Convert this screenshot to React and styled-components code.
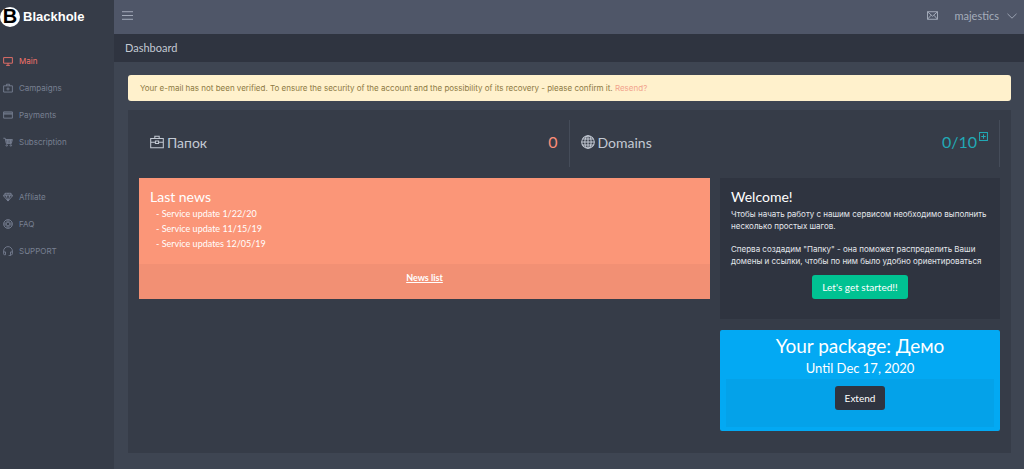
import React from "react";
import styled, { createGlobalStyle } from "styled-components";

const GlobalStyle = createGlobalStyle`
    * {
        box-sizing: border-box;
    }
    body {
        margin: 0;
        background: #3e4552;
        color: #c3c9d3;
        font-family: 'Century Gothic', Lato, 'Noto Sans', sans-serif;
        font-size: 10px;
    }
    h1, h2, h3, p, ul {
        margin: 0;
        padding: 0;
        font-weight: 400;
    }
    a {
        color: inherit;
        text-decoration: none;
    }
    button {
        font-family: inherit;
        cursor: pointer;
    }
`;

const smallFont = "'Century Gothic', Inter, 'Noto Sans', sans-serif";

const icons = {
    desktop: <path d="M1 2.5h14v9H1zM5 15h6M8 11.5V15" />,
    briefcase: <path d="M.8 4h14.4v10.5H.8zM5.5 4V1.5h5V4M.8 8.2h5.4M9.8 8.2h5.4M6.2 6.8h3.6v3H6.2z" />,
    bag: <path d="M1 4.5h14v10H1zM5.5 4.500V2h5v2.500M8 7v5M5.500 9.500h5" />,
    card: <path d="M1 3h14v10H1zM1 5h14M1 6.5h14" />,
    cart: (
        <>
            <path d="M.5 2h3l1.8 8.5h8L15 4H4M4.5 6h10M5 8.2h9M7 4v6.5M9.5 4v6.5M12 4v6.5" />
            <circle cx="6" cy="13.5" r="1.2" />
            <circle cx="12.5" cy="13.5" r="1.2" />
        </>
    ),
    diamond: <path d="M3.5 2h9L15.3 6 8 14.5.7 6zM.7 6h14.6M5.2 6L8 14.5 10.8 6 8 2zM5.2 6L3.5 2M10.8 6l1.7-4" />,
    support: (
        <>
            <circle cx="8" cy="8" r="7" />
            <circle cx="8" cy="8" r="3" />
            <path d="M6.5 1.2v4M9.5 1.2v4M6.5 10.8v4M9.5 10.8v4M1.2 6.5h4M1.2 9.5h4M10.8 6.5h4M10.8 9.5h4" />
        </>
    ),
    headphone: <path d="M4 14H2.5A1.5 1.5 0 0 1 1 12.5V8a7 7 0 0 1 14 0v4.5a1.5 1.5 0 0 1-1.5 1.5H12V9.5h3M1 9.5h3V14M12 14v1.5H9" />,
    world: (
        <>
            <circle cx="8" cy="8" r="7.2" />
            <ellipse cx="8" cy="8" rx="3.6" ry="7.2" />
            <path d="M8 .8v14.4M.8 8h14.4M2 4.5h12M2 11.5h12" />
        </>
    ),
    mail: <path d="M.7 2.5h14.6v11H.7zM.7 2.5L8 9l7.3-6.500M.7 13.500L6 7.500M15.300 13.500L10 7.500" />,
    menu: <path d="M0 2.5h16M0 8h16M0 13.5h16" />,
    down: <path d="M.8 4.5L8 11.5l7.200-7" />,
    plus: <path d="M1 1h14v14H1zM8 4v8M4 8h8" />,
};

const Icon = ({ name, size = 10, weight = 1.4 }) => (
    <svg width={size} height={size} viewBox="0 0 16 16" fill="none" stroke="currentColor" strokeWidth={weight} aria-hidden="true">
        {icons[name]}
    </svg>
);

const Page = styled.div`
    display: flex;
    min-height: 100vh;
`;

const Sidebar = styled.aside`
    flex: 0 0 114px;
    background: #363c48;
`;

const Logo = styled.a`
    display: flex;
    align-items: center;
    gap: 3px;
    height: 33px;
    color: #fff;
    font: bold 13px 'Liberation Sans', Arial, sans-serif;
`;

const LogoMark = styled.span`
    display: flex;
    align-items: center;
    justify-content: center;
    width: 20px;
    height: 20px;
    border-radius: 50%;
    background: #fff;
    color: #000;
    font-size: 20px;
`;

const Menu = styled.ul`
    list-style: none;
    margin-top: ${(props) => (props.$first ? 14 : 28)}px;
`;

const MenuLink = styled.a`
    display: flex;
    align-items: center;
    gap: 6px;
    height: 27px;
    padding-left: 3px;
    font-family: ${smallFont};
    font-size: 8px;
    color: ${(props) => (props.$active ? "#f3736a" : "#788092")};
`;

const Main = styled.main`
    flex: 1;
    min-width: 0;
`;

const TopBar = styled.header`
    display: flex;
    align-items: center;
    justify-content: space-between;
    height: 34px;
    padding: 0 7px 3px 8px;
    background: #4f5668;
`;

const TopButton = styled.button`
    display: flex;
    align-items: center;
    gap: 8px;
    padding: 0;
    border: 0;
    background: none;
    color: #a5adbb;
    font-size: 11px;
`;

const TopActions = styled.div`
    display: flex;
    align-items: center;
    gap: 16px;
`;

const TitleBar = styled.div`
    height: 28px;
    padding: 0 11px;
    background: #2f3440;
    line-height: 28px;

    h1 {
        font-size: 11px;
    }
`;

const Content = styled.div`
    padding: 13px 13px 16px 14px;
`;

const Alert = styled.div`
    padding: 0 12px;
    border-radius: 3px;
    background: #fff1cc;
    color: #8d7a43;
    font-family: ${smallFont};
    font-size: 8px;
    line-height: 26px;

    a {
        color: #f2a48c;
    }
`;

const Panel = styled.section`
    margin-top: 9px;
    padding: 10px 11px 22px;
    background: #363c48;
`;

const Stats = styled.div`
    display: grid;
    grid-template-columns: 1fr 1fr;
    margin-bottom: 11px;
`;

const Stat = styled.div`
    display: flex;
    align-items: center;
    justify-content: space-between;
    height: 47px;
    padding: 0 11px 3px;
    border-right: 1px solid #454c59;
`;

const StatName = styled.h3`
    display: flex;
    align-items: center;
    gap: 3px;
    font-size: 14px;
`;

const StatValue = styled.div`
    display: flex;
    align-items: flex-start;
    gap: 2px;
    color: ${(props) => props.$color};
    font-size: 16px;
    line-height: 20px;
`;

const Columns = styled.div`
    display: grid;
    grid-template-columns: 571fr 280fr;
    align-items: start;
    gap: 10px;
`;

const Side = styled.div`
    display: grid;
    gap: 11px;
`;

const CardTitle = styled.h2`
    font-size: 14px;
    line-height: 18px;
    color: #fff;
`;

const News = styled.section`
    background: #fb9678;
    color: #fff;
`;

const NewsBody = styled.div`
    padding: 10px 11px 13px;
`;

const NewsList = styled.ul`
    list-style: none;
    padding-left: 6px;
    font-size: 9px;
    line-height: 15px;
`;

const NewsFooter = styled.div`
    padding-bottom: 8px;
    background: #f29074;
    text-align: center;
    line-height: 27px;

    a {
        font-size: 9px;
        font-weight: 700;
        text-decoration: underline;
    }
`;

const Welcome = styled.section`
    padding: 10px 11px 20px;
    background: #2f3440;
    color: #e4e7ec;
    font-family: ${smallFont};
    font-size: 8px;
    line-height: 12px;

    h2 {
        margin-bottom: 2px;
        font-family: 'Century Gothic', Lato, sans-serif;
    }
    p {
        margin-bottom: 11px;
    }
    p + p {
        margin-bottom: 8px;
    }
`;

const Button = styled.button`
    display: block;
    height: 24px;
    margin: 0 auto;
    padding: 0 10px;
    border: 0;
    border-radius: 3px;
    background: ${(props) => (props.$dark ? "#2f3440" : "#00c292")};
    color: #fff;
    font-family: 'Century Gothic', Lato, sans-serif;
    font-size: 10px;
`;

const Package = styled.section`
    padding: 4px 6px;
    border-radius: 2px;
    background: #03a9f3;
    color: #fff;
    text-align: center;

    h2 {
        font-size: 19px;
        line-height: 24px;
    }
    h3 {
        font-size: 13px;
        line-height: 21px;
    }
`;

const PackageFooter = styled.div`
    padding: 7px 0 17px;
    background: #04a2e9;
`;

const links = [
    ["desktop", "Main"],
    ["bag", "Campaigns"],
    ["card", "Payments"],
    ["cart", "Subscription"],
];

const helpLinks = [
    ["diamond", "Affliate"],
    ["support", "FAQ"],
    ["headphone", "SUPPORT"],
];

const news = ["Service update 1/22/20", "Service update 11/15/19", "Service updates 12/05/19"];

const MenuList = ({ items, first }) => (
    <Menu $first={first}>
        {items.map(([icon, label]) => (
            <li key={label}>
                <MenuLink href="#" $active={label === "Main"}>
                    <Icon name={icon} />
                    {label}
                </MenuLink>
            </li>
        ))}
    </Menu>
);

const App = () => {
    return (
        <Page>
            <GlobalStyle />
            <Sidebar>
                <Logo href="#">
                    <LogoMark>B</LogoMark>
                    Blackhole
                </Logo>
                <nav>
                    <MenuList items={links} first />
                    <MenuList items={helpLinks} />
                </nav>
            </Sidebar>
            <Main>
                <TopBar>
                    <TopButton aria-label="Menu">
                        <Icon name="menu" size={11} />
                    </TopButton>
                    <TopActions>
                        <TopButton aria-label="Messages">
                            <Icon name="mail" size={11} />
                        </TopButton>
                        <TopButton>
                            majestics
                            <Icon name="down" size={10} />
                        </TopButton>
                    </TopActions>
                </TopBar>
                <TitleBar>
                    <h1>Dashboard</h1>
                </TitleBar>
                <Content>
                    <Alert>
                        Your e-mail has not been verified. To ensure the security of the account and the possibility of its recovery - please confirm it.{" "}
                        <a href="#">Resend?</a>
                    </Alert>
                    <Panel>
                        <Stats>
                            <Stat>
                                <StatName>
                                    <Icon name="briefcase" size={14} weight={1.2} />
                                    Папок
                                </StatName>
                                <StatValue $color="#fb8d78">0</StatValue>
                            </Stat>
                            <Stat>
                                <StatName>
                                    <Icon name="world" size={14} weight={1.2} />
                                    Domains
                                </StatName>
                                <StatValue $color="#22a9b5">
                                    0/10
                                    <Icon name="plus" size={9} weight={1.8} />
                                </StatValue>
                            </Stat>
                        </Stats>
                        <Columns>
                            <News>
                                <NewsBody>
                                    <CardTitle>Last news</CardTitle>
                                    <NewsList>
                                        {news.map((item) => (
                                            <li key={item}>- {item}</li>
                                        ))}
                                    </NewsList>
                                </NewsBody>
                                <NewsFooter>
                                    <a href="#">News list</a>
                                </NewsFooter>
                            </News>
                            <Side>
                                <Welcome>
                                    <CardTitle>Welcome!</CardTitle>
                                    <p>Чтобы начать работу с нашим сервисом необходимо выполнить несколько простых шагов.</p>
                                    <p>Сперва создадим "Папку" - она поможет распределить Ваши домены и ссылки, чтобы по ним было удобно ориентироваться</p>
                                    <Button>Let's get started!!</Button>
                                </Welcome>
                                <Package>
                                    <h2>Your package: Демо</h2>
                                    <h3>Until Dec 17, 2020</h3>
                                    <PackageFooter>
                                        <Button $dark>Extend</Button>
                                    </PackageFooter>
                                </Package>
                            </Side>
                        </Columns>
                    </Panel>
                </Content>
            </Main>
        </Page>
    );
};

export default App;
